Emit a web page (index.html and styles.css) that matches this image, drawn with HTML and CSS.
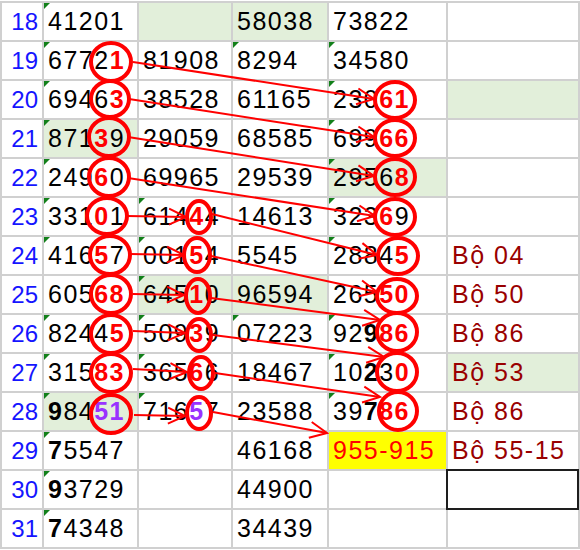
FILE: index.html
```html
<!DOCTYPE html>
<html>
<head>
<meta charset="utf-8">
<link rel="stylesheet" href="styles.css">
</head>
<body>
<div class="wrap">
  <div class="sheet">
    <div class="n">18</div><div class="c t">41201</div><div class="c g"></div><div class="c g">58038</div><div class="c">73822</div><div class="c"></div>
    <div class="n">19</div><div class="c t">6772<span class="r">1</span></div><div class="c">81908</div><div class="c t">8294</div><div class="c t">34580</div><div class="c"></div>
    <div class="n">20</div><div class="c t">6946<span class="r">3</span></div><div class="c">38528</div><div class="c">61165</div><div class="c t">230<span class="r">61</span></div><div class="c g"></div>
    <div class="n">21</div><div class="c g t">871<span class="r">3</span>9</div><div class="c">29059</div><div class="c">68585</div><div class="c t">699<span class="r">66</span></div><div class="c"></div>
    <div class="n">22</div><div class="c t">249<span class="r">6</span>0</div><div class="c">69965</div><div class="c">29539</div><div class="c g t">2956<span class="r">8</span></div><div class="c"></div>
    <div class="n">23</div><div class="c t">331<span class="r">0</span>1</div><div class="c t">614<span class="r">4</span>4</div><div class="c">14613</div><div class="c t">323<span class="r">6</span>9</div><div class="c"></div>
    <div class="n">24</div><div class="c t">416<span class="r">5</span>7</div><div class="c t">001<span class="r">5</span>4</div><div class="c">5545</div><div class="c t">2884<span class="r">5</span></div><div class="c bo">Bộ 04</div>
    <div class="n">25</div><div class="c">605<span class="r">68</span></div><div class="c g t">645<span class="r">1</span>0</div><div class="c g">96594</div><div class="c">265<span class="r">50</span></div><div class="c bo">Bộ 50</div>
    <div class="n">26</div><div class="c t">8244<span class="r">5</span></div><div class="c t">509<span class="r">3</span>9</div><div class="c t">07223</div><div class="c t">92<span class="b">9</span><span class="r">86</span></div><div class="c bo">Bộ 86</div>
    <div class="n">27</div><div class="c t">315<span class="r">83</span></div><div class="c t">365<span class="r">6</span>6</div><div class="c">18467</div><div class="c t">10<span class="b">2</span>3<span class="r">0</span></div><div class="c g bo">Bộ 53</div>
    <div class="n">28</div><div class="c g t"><span class="b">9</span>84<span class="p">51</span></div><div class="c t">716<span class="p">5</span>7</div><div class="c">23588</div><div class="c t">39<span class="b">7</span><span class="r">86</span></div><div class="c bo">Bộ 86</div>
    <div class="n">29</div><div class="c t"><span class="b">7</span>5547</div><div class="c"></div><div class="c">46168</div><div class="c y">955-915</div><div class="c bo">Bộ 55-15</div>
    <div class="n">30</div><div class="c t"><span class="b">9</span>3729</div><div class="c"></div><div class="c">44900</div><div class="c"></div><div class="c sel"></div>
    <div class="n">31</div><div class="c t"><span class="b">7</span>4348</div><div class="c"></div><div class="c">34439</div><div class="c"></div><div class="c"></div>
  </div>
  <svg class="marks" width="580" height="550" viewBox="0 0 580 550">
    <defs>
      <marker id="ah" viewBox="0 0 20 20" markerWidth="20" markerHeight="20" markerUnits="userSpaceOnUse" refX="19" refY="10" orient="auto" overflow="visible">
        <path d="M2,2 L19,10 L2,18" fill="none" stroke="#ff0000" stroke-width="2"/>
      </marker>
    </defs>
    <g fill="none" stroke="#ff0000" stroke-width="2" marker-end="url(#ah)">
      <line x1="133" y1="62" x2="374" y2="99"/>
      <line x1="129" y1="99" x2="374" y2="137"/>
      <line x1="128" y1="137" x2="374" y2="176"/>
      <line x1="128" y1="178" x2="375" y2="216"/>
      <line x1="127" y1="216" x2="186" y2="217"/>
      <line x1="212" y1="214" x2="377" y2="255"/>
      <line x1="130" y1="254" x2="184" y2="255"/>
      <line x1="211" y1="256" x2="377" y2="292"/>
      <line x1="133" y1="294" x2="184" y2="295"/>
      <line x1="211" y1="298" x2="380" y2="320"/>
      <line x1="133" y1="331" x2="185" y2="333"/>
      <line x1="213" y1="335" x2="384" y2="357"/>
      <line x1="133" y1="369" x2="187" y2="372"/>
      <line x1="215" y1="373" x2="380" y2="397"/>
      <line x1="134" y1="415" x2="185" y2="416"/>
      <line x1="213" y1="412" x2="327" y2="433"/>
    </g>
    <g fill="none" stroke="#ff0000" stroke-width="4">
      <ellipse cx="111" cy="62" rx="20" ry="19"/>
      <ellipse cx="110" cy="99" rx="19" ry="18"/>
      <ellipse cx="109" cy="137" rx="20" ry="19"/>
      <ellipse cx="109" cy="177" rx="20" ry="19"/>
      <ellipse cx="107" cy="216" rx="20" ry="18"/>
      <ellipse cx="110" cy="255" rx="20" ry="19"/>
      <ellipse cx="111" cy="294" rx="20" ry="19"/>
      <ellipse cx="111" cy="334" rx="20" ry="19"/>
      <ellipse cx="111" cy="373" rx="20" ry="19"/>
      <ellipse cx="111" cy="414" rx="20" ry="19"/>

      <ellipse cx="199" cy="217" rx="12" ry="16"/>
      <ellipse cx="197" cy="255" rx="13" ry="17"/>
      <ellipse cx="198" cy="296" rx="12" ry="17"/>
      <ellipse cx="199" cy="335" rx="12" ry="16"/>
      <ellipse cx="201" cy="373" rx="12" ry="16"/>
      <ellipse cx="199" cy="413" rx="12" ry="16"/>

      <ellipse cx="395" cy="100" rx="20" ry="18"/>
      <ellipse cx="395" cy="138" rx="20" ry="18"/>
      <ellipse cx="395" cy="177" rx="20" ry="18"/>
      <ellipse cx="395" cy="217" rx="20" ry="18"/>
      <ellipse cx="398" cy="256" rx="20" ry="18"/>
      <ellipse cx="397" cy="296" rx="20" ry="17"/>
      <ellipse cx="397" cy="332" rx="20" ry="19"/>
      <ellipse cx="397" cy="372" rx="20" ry="19"/>
      <ellipse cx="398" cy="411" rx="19" ry="19"/>
    </g>
  </svg>
</div>
</body>
</html>
```

FILE: styles.css
```css
html, body {
  margin: 0;
  padding: 0;
  background: #ffffff;
  overflow: hidden;
}

.wrap {
  position: relative;
  width: 580px;
  height: 550px;
  padding-top: 1px;
  box-sizing: border-box;
}

.sheet {
  display: grid;
  grid-template-columns: 42px 95px 94px 96px 119px 132px;
  grid-auto-rows: 39px;
  border-left: 2px solid #d0d0d0;
  border-top: 2px solid #d0d0d0;
  width: 580px;
  box-sizing: border-box;
  font-family: "Liberation Sans", Arial, sans-serif;
}

.n, .c {
  box-sizing: border-box;
  border-right: 2px solid #d0d0d0;
  border-bottom: 2px solid #d0d0d0;
  line-height: 37px;
  white-space: nowrap;
  overflow: hidden;
}

.n {
  text-align: right;
  padding-right: 4px;
  color: #1515ff;
  font-size: 24px;
}

.c {
  position: relative;
  padding-left: 4px;
  font-size: 25px;
  letter-spacing: 1.5px;
  color: #000000;
}

.g { background: #e2efda; }
.y { background: #ffff00; color: #ff0000; }
.bo { color: #990000; }

.t::before {
  content: "";
  position: absolute;
  top: 0;
  left: 0;
  border-top: 6px solid #12801a;
  border-right: 6px solid transparent;
}

.r { color: #ff0000; font-weight: bold; }
.p { color: #9933ff; font-weight: bold; }
.b { font-weight: bold; }

.sel { overflow: visible; }
.sel::before {
  content: "";
  position: absolute;
  top: -2px;
  left: -2px;
  right: -1px;
  bottom: -2px;
  border: 2px solid #1e1e1e;
}

.marks {
  position: absolute;
  top: 0;
  left: 0;
  pointer-events: none;
}
```
